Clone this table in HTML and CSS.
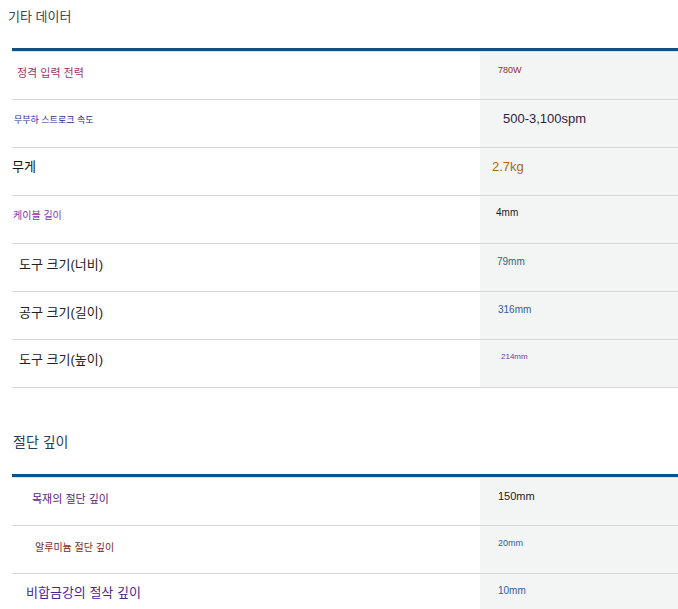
FILE: index.html
```html
<!DOCTYPE html>
<html lang="ko">
<head>
    <meta charset="UTF-8">
    <title>기타 데이터</title>
    <link rel="stylesheet" href="styles.css">
</head>
<body>
    <div class="page">

        <div class="section">
            <h2 class="title title-other">기타 데이터</h2>
            <div class="spec">
                <div class="row">
                    <div class="key k-power">정격 입력 전력</div>
                    <div class="val v-power">780W</div>
                </div>
                <div class="row">
                    <div class="key k-stroke">무부하 스트로크 속도</div>
                    <div class="val v-stroke">500-3,100spm</div>
                </div>
                <div class="row">
                    <div class="key k-weight">무게</div>
                    <div class="val v-weight">2.7kg</div>
                </div>
                <div class="row">
                    <div class="key k-cable">케이블 길이</div>
                    <div class="val v-cable">4mm</div>
                </div>
                <div class="row">
                    <div class="key k-size">도구 크기(너비)</div>
                    <div class="val v-blue">79mm</div>
                </div>
                <div class="row">
                    <div class="key k-size">공구 크기(길이)</div>
                    <div class="val v-blue v-316">316mm</div>
                </div>
                <div class="row">
                    <div class="key k-size k-height">도구 크기(높이)</div>
                    <div class="val v-height">214mm</div>
                </div>
            </div>
        </div>

        <div class="section section-cut">
            <h2 class="title title-cut">절단 깊이</h2>
            <div class="spec">
                <div class="row">
                    <div class="key k-wood">목재의 절단 깊이</div>
                    <div class="val v-wood">150mm</div>
                </div>
                <div class="row">
                    <div class="key k-alu">알루미늄 절단 깊이</div>
                    <div class="val v-blue v-alu">20mm</div>
                </div>
                <div class="row">
                    <div class="key k-steel">비합금강의 절삭 깊이</div>
                    <div class="val v-blue v-steel">10mm</div>
                </div>
            </div>
        </div>

    </div>
</body>
</html>
```

FILE: styles.css
```css
*{
    margin: 0;
    padding: 0;
    box-sizing: border-box;
}
body{
    background: #fff;
    font-family: "Liberation Sans", "Noto Sans CJK KR", sans-serif;
    color: #222;
}
.page{
    padding-left: 8px;
}

/* section titles */
.title{
    font-weight: normal;
    line-height: 20px;
}
.title-other{
    font-size: 13px;
    color: #34475a;
    padding-top: 7px;
    margin-bottom: 21px;
}
.section-cut{
    margin-top: 44px;
}
.title-cut{
    font-size: 14px;
    color: #1f3d63;
    padding-left: 5px;
    margin-bottom: 22px;
}

/* spec table */
.spec{
    margin-left: 4px;
    border-top: 3px solid #0d5188;
}
.spec::before{
    content: "";
    display: block;
    height: 1px;
    background: #cde5f4;
}
.row{
    display: grid;
    grid-template-columns: 468px 1fr;
    height: 48px;
    border-bottom: 1px solid #d5d6d6;
}
.key{
    padding-top: 12px;
    line-height: 16px;
    font-size: 13px;
    color: #222;
}
.val{
    background: #f3f4f4;
    padding-top: 10px;
    padding-left: 18px;
    line-height: 16px;
    font-size: 10px;
}

.k-power{
    font-size: 11px;
    color: #a0306a;
    padding-left: 5px;
    padding-top: 13px;
}
.k-stroke{
    font-size: 9px;
    color: #2c2c96;
    padding-left: 2px;
}
.k-weight{
    color: #111;
    padding-top: 11px;
}
.k-cable{
    font-size: 10px;
    color: #7b34b0;
    padding-left: 1px;
}
.k-size{
    padding-left: 7px;
    padding-top: 13px;
}
.k-height{
    padding-top: 12px;
}
.k-wood{
    font-size: 11px;
    color: #5b2484;
    padding-left: 20px;
    padding-top: 13px;
}
.k-alu{
    font-size: 10px;
    color: #7d1f1f;
    padding-left: 23px;
    padding-top: 14px;
}
.k-steel{
    font-size: 13px;
    color: #4b2596;
    padding-left: 14px;
    padding-top: 11px;
}

.v-power{
    font-size: 9px;
    color: #9a2a2a;
    padding-left: 18px;
}
.v-stroke{
    font-size: 13px;
    color: #2f1d45;
    padding-left: 23px;
    padding-top: 11px;
}
.v-weight{
    font-size: 13px;
    color: #a86a1e;
    padding-left: 12px;
    padding-top: 11px;
}
.v-cable{
    color: #222;
    padding-left: 16px;
    padding-top: 9px;
}
.v-blue{
    color: #2e5fa5;
    padding-left: 17px;
}
.v-316{
    padding-left: 18px;
}
.v-height{
    font-size: 8px;
    color: #7a3a9a;
    padding-left: 21px;
    padding-top: 9px;
}
.v-wood{
    font-size: 11px;
    color: #222;
}
.v-alu{
    font-size: 9px;
    padding-left: 18px;
    padding-top: 9px;
}
.v-steel{
    padding-left: 18px;
    padding-top: 9px;
}
```
